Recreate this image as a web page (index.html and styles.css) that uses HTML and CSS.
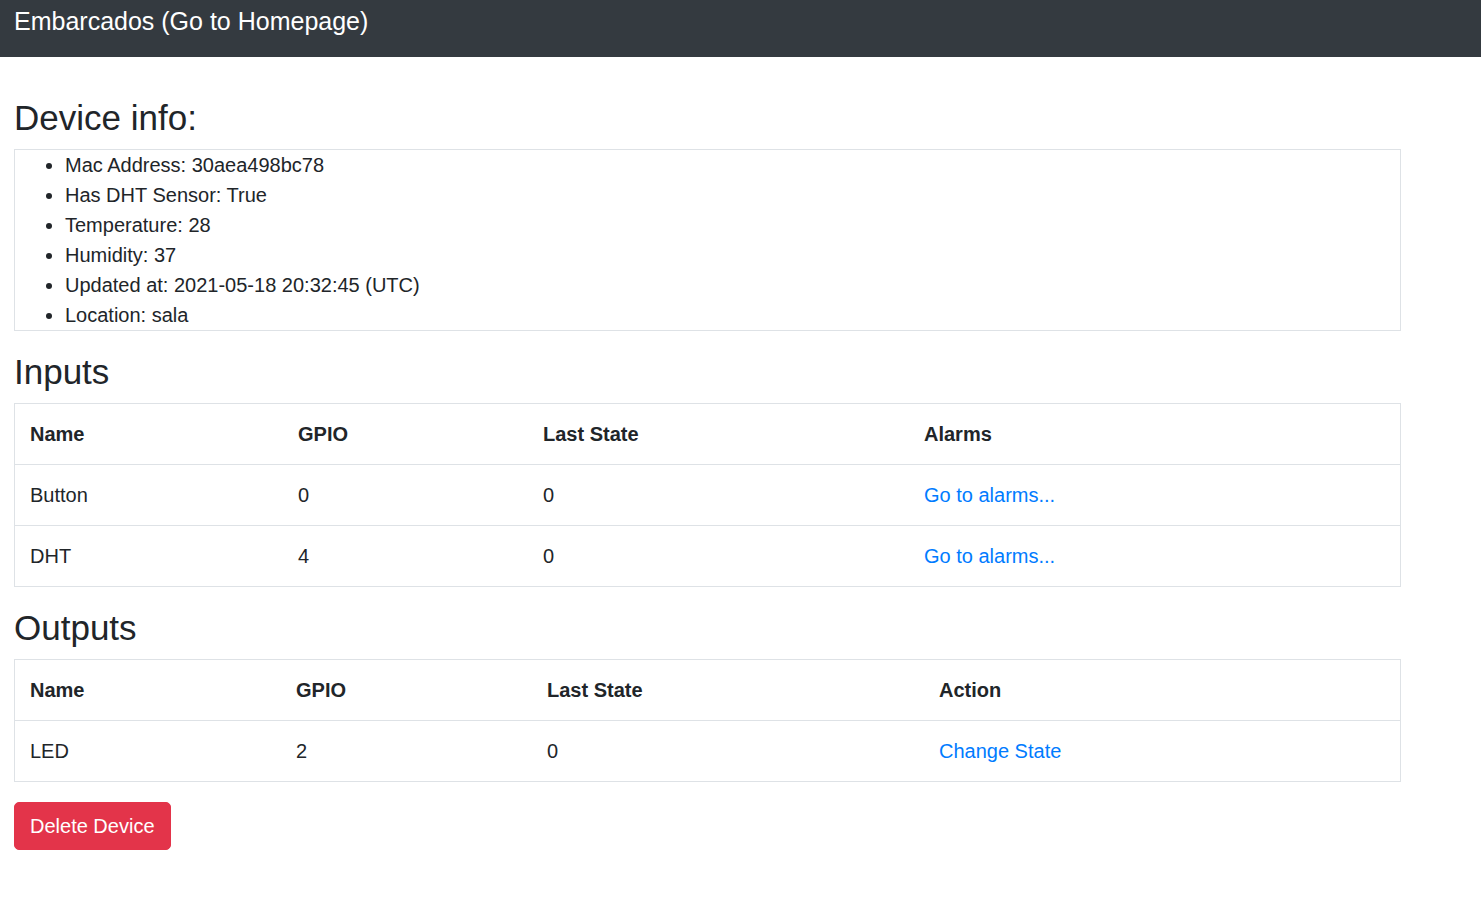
FILE: index.html
```html
<!DOCTYPE html>
<html lang="en">
<head>
<meta charset="utf-8">
<title>Device</title>
<link rel="stylesheet" href="styles.css">
</head>
<body>
<nav class="navbar">
  <a class="brand" href="#">Embarcados (Go to Homepage)</a>
</nav>
<main class="main">
  <h2 class="title">Device info:</h2>
  <div class="info-box">
    <ul class="info-list">
      <li>Mac Address: 30aea498bc78</li>
      <li>Has DHT Sensor: True</li>
      <li>Temperature: 28</li>
      <li>Humidity: 37</li>
      <li>Updated at: 2021-05-18 20:32:45 (UTC)</li>
      <li>Location: sala</li>
    </ul>
  </div>

  <h2 class="title">Inputs</h2>
  <div class="table-wrap">
    <table class="table">
      <colgroup>
        <col class="in-c1"><col class="in-c2"><col class="in-c3"><col>
      </colgroup>
      <thead>
        <tr><th>Name</th><th>GPIO</th><th>Last State</th><th>Alarms</th></tr>
      </thead>
      <tbody>
        <tr><td>Button</td><td>0</td><td>0</td><td><a class="link" href="#">Go to alarms...</a></td></tr>
        <tr><td>DHT</td><td>4</td><td>0</td><td><a class="link" href="#">Go to alarms...</a></td></tr>
      </tbody>
    </table>
  </div>

  <h2 class="title">Outputs</h2>
  <div class="table-wrap">
    <table class="table">
      <colgroup>
        <col class="out-c1"><col class="out-c2"><col class="out-c3"><col>
      </colgroup>
      <thead>
        <tr><th>Name</th><th>GPIO</th><th>Last State</th><th>Action</th></tr>
      </thead>
      <tbody>
        <tr><td>LED</td><td>2</td><td>0</td><td><a class="link" href="#">Change State</a></td></tr>
      </tbody>
    </table>
  </div>

  <button class="btn-danger" type="button">Delete Device</button>
</main>
</body>
</html>
```

FILE: styles.css
```css
* { box-sizing: border-box; }

html { font-size: 20px; }

body {
  margin: 0;
  font-family: "Liberation Sans", Arial, sans-serif;
  font-size: 20px;
  line-height: 1.5;
  color: #212529;
  background: #fff;
}

.navbar {
  height: 57px;
  background: #343a40;
  padding: 3px 14px;
}

.brand {
  color: #fff;
  text-decoration: none;
  font-size: 25px;
  line-height: 37.5px;
}

.main {
  padding: 40px 14px 20px 14px;
}

.title {
  margin: 0 0 10px 0;
  font-size: 35px;
  font-weight: 500;
  line-height: 1.2;
}

.info-box {
  width: 1387px;
  border: 1px solid #dee2e6;
  margin-bottom: 20px;
}

.info-list {
  margin: 0;
  padding-left: 50px;
}

.table-wrap {
  width: 1387px;
  border: 1px solid #dee2e6;
  margin-bottom: 20px;
}

.table {
  width: 100%;
  border-collapse: collapse;
  table-layout: fixed;
}

.table th,
.table td {
  padding: 15px;
  line-height: 30px;
  text-align: left;
  vertical-align: top;
  border-top: 1px solid #dee2e6;
}

.table thead tr:first-child th { border-top: 0; }

.table th { font-weight: 700; }

.in-c1 { width: 268px; }
.in-c2 { width: 245px; }
.in-c3 { width: 381px; }

.out-c1 { width: 266px; }
.out-c2 { width: 251px; }
.out-c3 { width: 392px; }

.link {
  color: #007bff;
  text-decoration: none;
}

.btn-danger {
  display: inline-block;
  font-family: inherit;
  font-size: 20px;
  line-height: 30px;
  padding: 8px 15px;
  color: #fff;
  background: #e3344a;
  border: 1px solid #e3344a;
  border-radius: 5px;
  cursor: pointer;
}
```
